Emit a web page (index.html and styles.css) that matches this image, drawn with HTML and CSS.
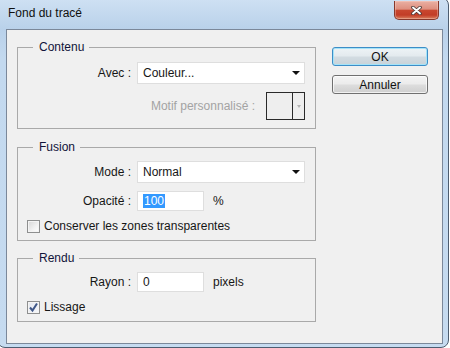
FILE: index.html
```html
<!DOCTYPE html>
<html lang="fr">
<head>
    <meta charset="UTF-8">
    <meta name="viewport" content="width=device-width, initial-scale=1.0">
    <title>Fond du tracé</title>
    <link rel="stylesheet" href="styles.css">
</head>
<body>
    <div class="window">
        <div class="titlebar">
            <span class="title">Fond du tracé</span>
            <button class="close-btn" aria-label="Fermer">
                <svg width="11" height="9" viewBox="0 0 11 9">
                    <path d="M2 1.5L9 7.5M9 1.5L2 7.5" stroke="#4a3a38" stroke-width="3.6" stroke-linecap="round"/>
                    <path d="M2 1.5L9 7.5M9 1.5L2 7.5" stroke="#fff" stroke-width="1.9" stroke-linecap="round"/>
                </svg>
            </button>
        </div>

        <div class="client">
            <div class="groups">
                <fieldset class="group group-contenu">
                    <legend>Contenu</legend>
                    <div class="row">
                        <span class="row-label">Avec :</span>
                        <div class="dropdown"><span>Couleur...</span><i class="arrow"></i></div>
                    </div>
                    <div class="motif-row">
                        <span class="disabled">Motif personnalisé :</span>
                        <div class="swatch">
                            <span class="swatch-color"></span>
                            <span class="swatch-btn"><i class="arrow arrow-small"></i></span>
                        </div>
                    </div>
                </fieldset>

                <fieldset class="group group-fusion">
                    <legend>Fusion</legend>
                    <div class="row">
                        <span class="row-label">Mode :</span>
                        <div class="dropdown"><span>Normal</span><i class="arrow"></i></div>
                    </div>
                    <div class="row">
                        <span class="row-label">Opacité :</span>
                        <div class="field">
                            <div class="text-input"><span class="selected">100</span></div>
                            <span class="unit">%</span>
                        </div>
                    </div>
                    <div class="check-row">
                        <span class="checkbox"></span>
                        <span>Conserver les zones transparentes</span>
                    </div>
                </fieldset>

                <fieldset class="group group-rendu">
                    <legend>Rendu</legend>
                    <div class="row">
                        <span class="row-label">Rayon :</span>
                        <div class="field">
                            <div class="text-input"><span>0</span></div>
                            <span class="unit">pixels</span>
                        </div>
                    </div>
                    <div class="check-row">
                        <span class="checkbox checked">
                            <svg width="11" height="11" viewBox="0 0 11 11">
                                <path d="M2 5.5L4.5 8.5L9 1.5" fill="none" stroke="#3f5788" stroke-width="2"/>
                            </svg>
                        </span>
                        <span>Lissage</span>
                    </div>
                </fieldset>
            </div>

            <div class="buttons">
                <button class="btn btn-default">OK</button>
                <button class="btn">Annuler</button>
            </div>
        </div>
    </div>
</body>
</html>
```

FILE: styles.css
```css
:root {
    --frame: #c2d8ef;
    --face: #f0f0f0;
    --text: #161616;
    --disabled: #a3a3a3;
    --group-line: #a9a9a9;
}

* {
    box-sizing: border-box;
}

body {
    margin: 0;
    width: 450px;
    height: 348px;
    overflow: hidden;
    background: #ffffff;
    font-family: 'Liberation Sans', Arial, sans-serif;
    font-size: 12px;
    color: var(--text);
}

.window {
    display: flex;
    flex-direction: column;
    width: 452px;
    height: 351px;
    margin: -3px 0 0 -3px;
    border: 1px solid #4d5d70;
    border-radius: 8px;
    background: linear-gradient(to bottom, #cfe1f3 0, #b9d1ea 31px, #c3d9ef 60px, #c6dbf0 100%);
}

.titlebar {
    display: flex;
    align-items: center;
    height: 31px;
    padding-left: 10px;
}

.title {
    line-height: 15px;
    color: #101010;
}

.close-btn {
    display: flex;
    align-items: center;
    justify-content: center;
    align-self: flex-start;
    width: 45px;
    height: 19px;
    margin: 3px 9px 0 auto;
    padding: 0;
    border: 1px solid #86382c;
    border-top: none;
    border-radius: 0 0 5px 5px;
    background: linear-gradient(to bottom, #eab0a3 0%, #de8f7f 45%, #c8472f 52%, #c23d27 78%, #d9805f 100%);
    box-shadow: inset 0 0 0 1px rgba(255, 220, 210, 0.35);
}

.client {
    display: flex;
    gap: 16px;
    flex: 1;
    margin: 0 5px 3px 8px;
    padding: 10px 14px 0 10px;
    border: 1px solid #7b889a;
    background: var(--face);
}

.groups {
    display: flex;
    flex-direction: column;
    gap: 10px;
    width: 299px;
}

.group {
    display: flex;
    flex-direction: column;
    gap: 8px;
    margin: 0;
    min-width: 0;
    padding: 6px 9px 6px 9px;
    border: 1px solid var(--group-line);
    border-radius: 0;
}

.group legend {
    margin-left: 6px;
    padding: 0 5px 0 6px;
    line-height: 15px;
    color: #10143a;
}

.group-contenu {
    padding-top: 7px;
    padding-bottom: 8px;
}

.group-fusion {
    gap: 8px;
    margin-top: 1px;
}

.row {
    display: grid;
    grid-template-columns: 104px auto;
    column-gap: 6px;
    align-items: center;
}

.row-label {
    text-align: right;
}

.dropdown {
    display: flex;
    align-items: center;
    justify-content: space-between;
    width: 168px;
    height: 22px;
    padding: 0 4px 0 5px;
    border: 1px solid #dedede;
    background: #ffffff;
}

.arrow {
    width: 0;
    height: 0;
    border-left: 4px solid transparent;
    border-right: 4px solid transparent;
    border-top: 4px solid #111111;
}

.arrow-small {
    border-left-width: 2px;
    border-right-width: 2px;
    border-top: 3px solid #b5b5b5;
}

.motif-row {
    display: flex;
    align-items: center;
    justify-content: flex-end;
    gap: 11px;
    padding-right: 1px;
}

.disabled {
    color: var(--disabled);
}

.swatch {
    display: flex;
    width: 39px;
    height: 28px;
    border: 1px solid #2a2a2a;
    background: #eeeeee;
}

.swatch-color {
    width: 26px;
    border-right: 1px solid #2a2a2a;
}

.swatch-btn {
    display: flex;
    align-items: center;
    justify-content: center;
    flex: 1;
}

.field {
    display: flex;
    align-items: center;
    gap: 9px;
}

.text-input {
    display: flex;
    align-items: center;
    width: 67px;
    height: 20px;
    padding-left: 5px;
    border: 1px solid #dedede;
    background: #ffffff;
}

.selected {
    padding: 0 1px;
    line-height: 14px;
    background: #3399ff;
    color: #ffffff;
}

.check-row {
    display: flex;
    align-items: center;
    gap: 4px;
    line-height: 15px;
}

.checkbox {
    display: flex;
    align-items: center;
    justify-content: center;
    width: 13px;
    height: 13px;
    border: 1px solid #8e8f8f;
    background: linear-gradient(135deg, #d6d6d6 0%, #f2f2f2 60%, #ffffff 100%);
    box-shadow: inset 0 0 0 1px #f4f4f4;
}

.checkbox.checked {
    background: linear-gradient(135deg, #e4e8f0 0%, #f6f7fa 100%);
}

.buttons {
    display: flex;
    flex-direction: column;
    gap: 9px;
    width: 96px;
    padding-top: 7px;
}

.btn {
    height: 19px;
    padding: 0;
    border: 1px solid #707070;
    border-radius: 3px;
    background: linear-gradient(to bottom, #f4f4f4 0%, #ebebeb 48%, #dddddd 52%, #cfcfcf 100%);
    box-shadow: inset 0 0 0 1px rgba(255, 255, 255, 0.7);
    font-family: inherit;
    font-size: 12px;
    color: #111111;
}

.btn-default {
    border-color: #3c8dc7;
    box-shadow: inset 0 0 0 1px #a4e3f8;
    background: linear-gradient(to bottom, #eef3f6 0%, #e3eaee 48%, #d3dce2 52%, #c8d2d8 100%);
}
```
